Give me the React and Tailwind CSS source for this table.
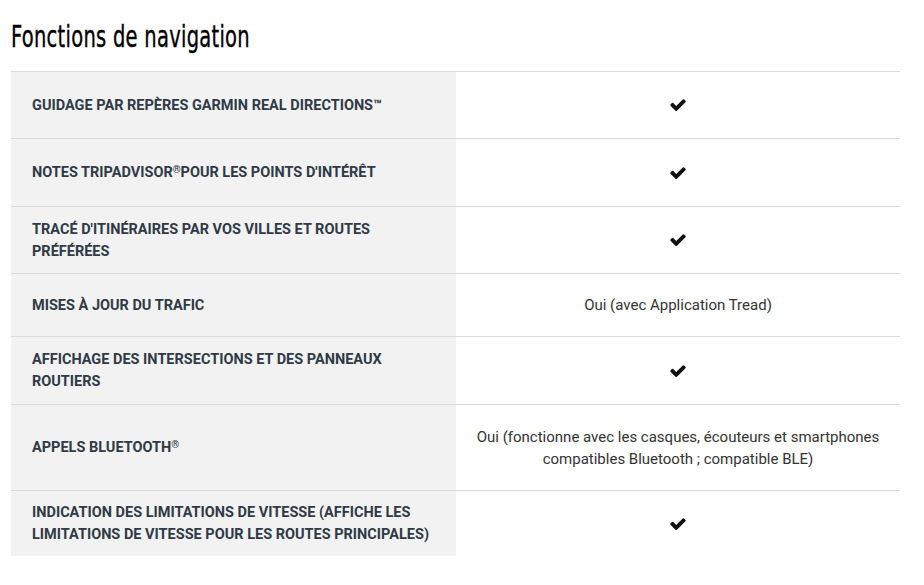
import React from "react";

const Check = () => (
  <svg width="18" height="14" viewBox="0 0 1792 1400" aria-hidden="true">
    <path
      transform="translate(0,-220)"
      fill="#111"
      d="M1671 566q0 40-28 68l-724 724-136 136q-28 28-68 28t-68-28l-136-136-362-362q-28-28-28-68t28-68l136-136q28-28 68-28t68 28l294 295 656-657q28-28 68-28t68 28l136 136q28 28 28 68z"
    />
  </svg>
);

const Reg = () => (
  <span className="relative -top-[4px] text-[10px] leading-none font-bold">®</span>
);

const rows = [
  {
    h: "h-[67px]",
    label: (
      <>
        GUIDAGE PAR REPÈRES GARMIN REAL DIRECTIONS<span className="relative -top-[1px] text-[13px] font-black">™</span>
      </>
    ),
    value: <Check />,
  },
  {
    h: "h-[68px]",
    label: (
      <>
        NOTES TRIPADVISOR
        <Reg />
        POUR LES POINTS D'INTÉRÊT
      </>
    ),
    value: <Check />,
  },
  {
    h: "h-[67px]",
    label: (
      <>
        TRACÉ D'ITINÉRAIRES PAR VOS VILLES ET ROUTES
        <br />
        PRÉFÉRÉES
      </>
    ),
    value: <Check />,
  },
  { h: "h-[63px]", label: <>MISES À JOUR DU TRAFIC</>, value: <span>Oui (avec Application Tread)</span> },
  {
    h: "h-[68px]",
    label: (
      <>
        AFFICHAGE DES INTERSECTIONS ET DES PANNEAUX
        <br />
        ROUTIERS
      </>
    ),
    value: <Check />,
  },
  {
    h: "h-[86px]",
    label: (
      <>
        APPELS BLUETOOTH
        <Reg />
      </>
    ),
    value: (
      <span>
        Oui (fonctionne avec les casques, écouteurs et smartphones
        <br />
        compatibles Bluetooth ; compatible BLE)
      </span>
    ),
  },
  {
    h: "h-[66px]",
    label: (
      <>
        INDICATION DES LIMITATIONS DE VITESSE (AFFICHE LES
        <br />
        LIMITATIONS DE VITESSE POUR LES ROUTES PRINCIPALES)
      </>
    ),
    value: <Check />,
  },
];

export default function App() {
  return (
    <div className="w-[924px] h-[585px] bg-white px-[11px] pr-[24px] font-['Roboto',sans-serif]">
      <div className="h-[71px] pt-[18px]">
        <h2 className="inline-block origin-left scale-x-[0.63] text-[31px] leading-[36px] text-black font-normal font-['DejaVu_Sans',sans-serif] tracking-[0.4px] whitespace-nowrap [-webkit-text-stroke:0.4px_black]">
          Fonctions de navigation
        </h2>
      </div>
      <div className="flex flex-col">
        {rows.map((r, i) => (
          <div key={i} className={`flex border-t border-[#dadada] ${r.h}`}>
            <div className="w-[445px] shrink-0 bg-[#f2f2f2] flex items-center pl-[21px] pt-[1px] text-[14.5px] leading-[22px] font-bold text-[#2f3a46]">
              <div>{r.label}</div>
            </div>
            <div className="flex-1 flex items-center justify-center text-center text-[15px] leading-[22px] text-[#333]">
              {r.value}
            </div>
          </div>
        ))}
      </div>
    </div>
  );
}
